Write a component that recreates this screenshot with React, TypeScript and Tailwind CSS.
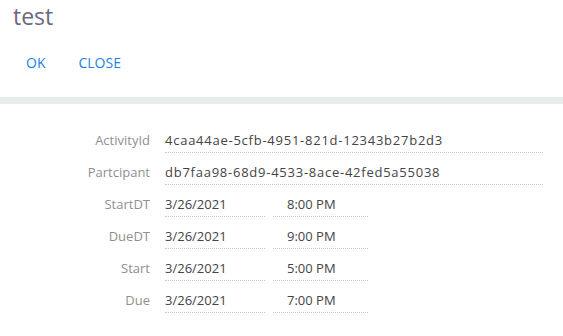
export default function App() {
  const rows: { label: string; value?: string; date?: string; time?: string }[] = [
    { label: "ActivityId", value: "4caa44ae-5cfb-4951-821d-12343b27b2d3" },
    { label: "Partcipant", value: "db7faa98-68d9-4533-8ace-42fed5a55038" },
    { label: "StartDT", date: "3/26/2021", time: "8:00 PM" },
    { label: "DueDT", date: "3/26/2021", time: "9:00 PM" },
    { label: "Start", date: "3/26/2021", time: "5:00 PM" },
    { label: "Due", date: "3/26/2021", time: "7:00 PM" },
  ];
  return (
    <div className="w-[563px] h-[336px] bg-white overflow-hidden" style={{ fontFamily: '"Open Sans", sans-serif' }}>
      <div className="pl-[13px] pt-[1px] h-[37px] text-[23px] leading-[30px] text-[#6b6880]">test</div>
      <div className="flex pl-[26px] gap-[33px] h-[53px] pt-[14px] text-[14px] leading-[24px] text-[#1f7fe0]">
        <span>OK</span>
        <span>CLOSE</span>
      </div>
      <div className="h-[7px] mt-[7px] bg-[#e8ebeb]" />
      <div className="pt-[27px] flex flex-col gap-[10px]">
        {rows.map((r) => (
          <div key={r.label} className="flex items-start h-[22px]">
            <div className="w-[150px] text-right text-[13px] leading-[18px] text-[#8f8f8f]">{r.label}</div>
            <div className="ml-[15px] flex gap-[8px]">
              {r.value ? (
                <div className="w-[378px] border-b border-dotted border-[#c8c8c8] text-[13px] tracking-[0.75px] leading-[18px] text-[#444] pb-[3px]">{r.value}</div>
              ) : (
                <>
                  <div className="w-[100px] border-b border-dotted border-[#c8c8c8] text-[13px] leading-[18px] text-[#444] pb-[3px]">{r.date}</div>
                  <div className="w-[95px] pl-[14px] border-b border-dotted border-[#c8c8c8] text-[13px] leading-[18px] text-[#444] pb-[3px]">{r.time}</div>
                </>
              )}
            </div>
          </div>
        ))}
      </div>
    </div>
  );
}
